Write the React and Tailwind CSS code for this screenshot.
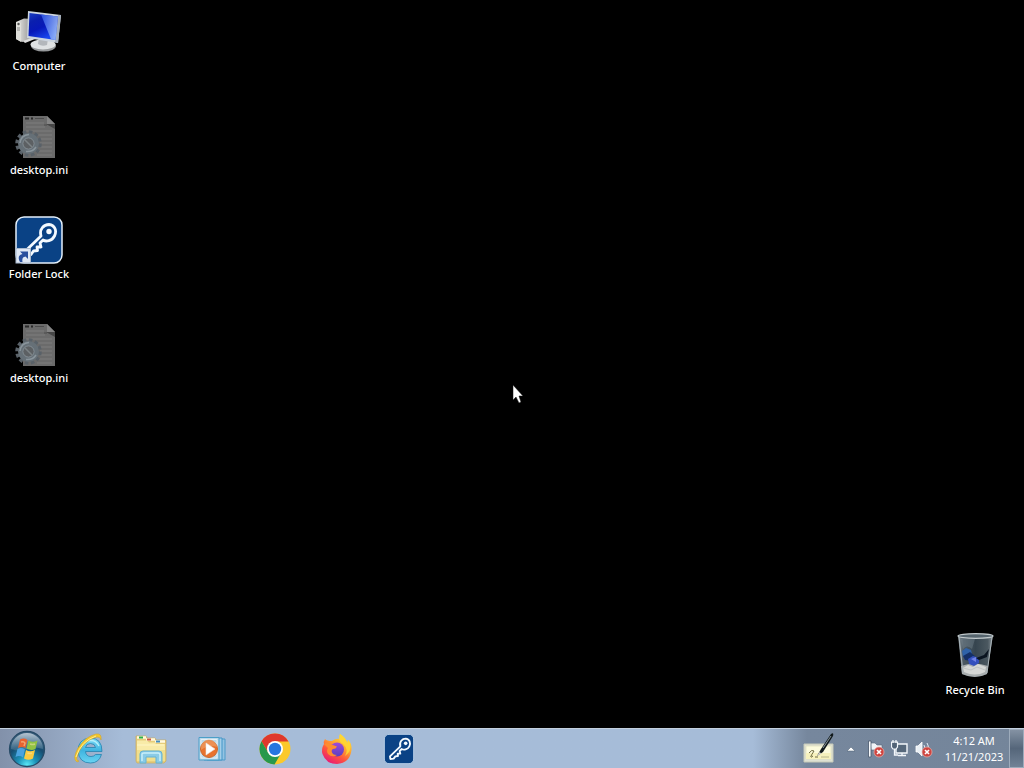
import React from "react";

function ComputerIcon() {
  return (
    <svg viewBox="0 0 48 48" className="size-12" aria-hidden="true">
      <defs>
        <linearGradient id="screen" x1="0" y1="0" x2="0.5" y2="1">
          <stop offset="0" stopColor="#1a3fc4" />
          <stop offset="0.3" stopColor="#0a1fae" />
          <stop offset="0.6" stopColor="#0718b8" />
          <stop offset="1" stopColor="#1a48f0" />
        </linearGradient>
        <linearGradient id="screenGlow" x1="0" y1="0" x2="1" y2="0.3">
          <stop offset="0" stopColor="#2b55ea" />
          <stop offset="1" stopColor="#9dbcf8" />
        </linearGradient>
        <linearGradient id="tower" x1="0" y1="0" x2="1" y2="0">
          <stop offset="0" stopColor="#f1f1ee" />
          <stop offset="0.4" stopColor="#c4c4c2" />
          <stop offset="1" stopColor="#8a8a8a" />
        </linearGradient>
      </defs>
      <path d="M1 14 9 10.500 18 11V31L7 34 1 31Z" fill="url(#tower)" />
      <path d="M1 14 6 15V34L1 31Z" fill="#deded9" />
      <circle cx="3.5" cy="16" r="1.200" fill="#555" />
      <path d="M2 20h3M2 22h3" stroke="#888" strokeWidth="1" />
      <path d="M8 33 19 29 20 31 10 35Z" fill="#ddd" />
      <ellipse cx="28.500" cy="38" rx="12.500" ry="5.500" fill="#96999b" />
      <ellipse cx="28" cy="36.500" rx="12.500" ry="5" fill="#dfe2e3" />
      <path d="M24 29 33 31 32 37Q27 39 23 36Z" fill="#b3b7bb" />
      <path d="M13 3 46 7 43 35 12 30Z" fill="#ccd5df" />
      <path d="M43 7 46 7 43 35 40 34Z" fill="#a3adba" />
      <path d="M14.500 5 43 8.500 40.500 32 13.500 28Z" fill="url(#screen)" />
      <path d="M26 6.400 43 8.500 40.500 32 36 31.300Z" fill="url(#screenGlow)" opacity=".85" />
    </svg>
  );
}

function ConfigFileIcon() {
  return (
    <svg viewBox="0 0 48 48" className="size-12" aria-hidden="true">
      <path d="M8 4H32L40 12V46H8Z" fill="#6b6b6b" />
      <path d="M32 4 40 12H32Z" fill="#858585" />
      <path d="M31 12 40 12V17Z" fill="#464646" />
      <path d="M11 11h18M11 15h19M11 19h26M20 23h17M22 27h15M25 31h12M25 35h12M24 39h13M22 43h15" stroke="#7e7e7e" />
      <path d="M10 6.500h4M16 6.500h2" stroke="#292929" strokeWidth="2" />
      <path d="M20 6.500h9M29 13h3" stroke="#4c4c4c" />
      <g fill="none">
        <circle cx="13.500" cy="31.500" r="11.500" stroke="#596168" strokeWidth="3.500" strokeDasharray="3.500 2.520" />
        <circle cx="13.500" cy="31.500" r="8" stroke="#667077" strokeWidth="5" />
        <path d="M5 31Q6 23 14 22.500M21 35Q18 40 11 39.500" stroke="#8a959c" strokeWidth="1.500" />
        <circle cx="13.500" cy="31.500" r="5.500" strokeWidth="1" stroke="#87939b" />
      </g>
      <circle cx="13.500" cy="31.500" r="5" fill="#5c6063" />
      <path d="m10 28 7 7" stroke="#7c8386" strokeWidth="1.500" />
    </svg>
  );
}

function KeyShape() {
  return (
    <g>
      <path
        d="M26 20C24 13 29 8.500 34 8.500C40 9 42 15 39.500 20C37 25 31 26 28 24L25 27 26 31 22 31 22.500 34.500 18.500 35 16 38.500 11 39 10.500 35Z"
        fill="#0a4285"
        stroke="#f4faff"
        strokeWidth="2.800"
        strokeLinejoin="round"
      />
      <circle cx="34" cy="15.500" r="2.700" fill="#f4faff" />
    </g>
  );
}

function FolderLockIcon() {
  return (
    <svg viewBox="0 0 48 48" className="size-12" aria-hidden="true">
      <rect x="1" y="1" width="46" height="46" rx="8" fill="#0a4285" stroke="#e4f0fb" strokeWidth="1.500" />
      <KeyShape />
      <rect x="1" y="32.500" width="14.500" height="14.500" fill="#dfe8f5" stroke="#a8b8cd" />
      <path d="M5 46Q1.500 39.500 7.500 38L5 35.500H13V43L10.500 40.500Q6.500 41 7.500 46Z" fill="#284f9e" />
    </svg>
  );
}

function RecycleBinIcon() {
  return (
    <svg viewBox="0 0 48 48" className="size-12" aria-hidden="true">
      <defs>
        <linearGradient id="bin" x1="0" x2="1">
          <stop offset="0" stopColor="#8d989e" />
          <stop offset="0.15" stopColor="#4d5a64" />
          <stop offset="0.5" stopColor="#36454f" />
          <stop offset="0.85" stopColor="#4b5860" />
          <stop offset="1" stopColor="#8b959b" />
        </linearGradient>
      </defs>
      <path d="M7 3 11 42Q24 48 36 42L42 3Z" fill="url(#bin)" />
      <path d="M10 34Q23 29 37 34L36 42Q24 48 11 42Z" fill="#a9aeaf" />
      <path d="M12 36 17 33 22 35 27 32 35 35 34 40Q24 45 13 40Z" fill="#d5d7d5" />
      <path d="m12 36 8 2 6-3 8 3" fill="none" stroke="#bfc3c2" />
      <path d="M11 19 15 16 20 18 21 22 17 26 12 25Z" fill="#2f62a8" />
      <path d="M12 24 19 20 24 24 20 29 14 28Z" fill="#142f66" />
      <path d="M17 27 22 24 28 26 28 31 23 34 18 32Z" fill="#3450bd" />
      <path d="M20 27 25 25 25 30Z" fill="#7182e6" />
      <path d="m25 26 8-3 5-6-2 8-8 3Z" fill="#0a1420" />
      <path d="M8 5 12 41M41 5 36 41" stroke="#a9b3b8" strokeWidth="1" />
      <path d="M10 7H24L21 17Q16 12 12 17Z" fill="#8c9ba5" opacity=".3" />
      <ellipse cx="24.500" cy="4" rx="17.500" ry="2.300" fill="#56656e" stroke="#c0c8cb" strokeWidth="1.200" />
    </svg>
  );
}

function StartIcon() {
  return (
    <svg viewBox="0 0 38 38" className="size-[38px]" aria-hidden="true">
      <defs>
        <radialGradient id="orb" cx="50%" cy="96%" r="90%">
          <stop offset="0" stopColor="#5ceaf8" />
          <stop offset="0.3" stopColor="#1c92b8" />
          <stop offset="0.65" stopColor="#174d70" />
          <stop offset="1" stopColor="#3d6280" />
        </radialGradient>
        <linearGradient id="orbShine" x1="0" y1="0" x2="0" y2="1">
          <stop offset="0" stopColor="#d3dde5" stopOpacity=".8" />
          <stop offset="1" stopColor="#92b0c3" stopOpacity=".2" />
        </linearGradient>
      </defs>
      <circle cx="19" cy="19" r="17.500" fill="url(#orb)" stroke="#274b67" strokeWidth="1.300" />
      <path d="M3 19A16 16 0 0 1 35 19Q26 16 19 19 11 22 3 19Z" fill="url(#orbShine)" />
      <path d="M12 9.500Q16 7.500 19.500 10L17.500 18Q14 16 10 18Z" fill="#e8622f" />
      <path d="M20.500 10.500Q25 13 29.500 10.500L27.500 19Q23 21 18.500 18.500Z" fill="#91c343" />
      <path d="M9.500 19Q13 17 17 19.500L15 27.500Q11.500 25 7.500 27Z" fill="#4aa3df" />
      <path d="M18 20Q22 22.500 27 20L25 28.500Q20.500 31 16 28.500Z" fill="#fccb40" />
      <path d="M13 12Q16 11 17 13L16 16M22 14Q25 15 27 14M19.500 23Q22 24 24 23" stroke="#fbe6b0" strokeWidth="1.500" fill="none" opacity=".5" />
    </svg>
  );
}

function ExplorerIcon() {
  return (
    <svg viewBox="0 0 32 32" className="size-8" aria-hidden="true">
      <defs>
        <linearGradient id="ieBlue" x1="0" y1="0" x2="0" y2="1">
          <stop offset="0" stopColor="#7fdcf7" />
          <stop offset="0.5" stopColor="#3fb4e0" />
          <stop offset="1" stopColor="#6ad4f2" />
        </linearGradient>
      </defs>
      <path d="M29 18.500H12.500Q13 23.500 18 23.500Q21 23.500 22.500 21.500H28.500Q26 30 17.500 30Q6 30 5 18Q5 6 17 5Q29 5 29 18.500ZM12.500 14.500H22.500Q22 10.500 17.500 10.500Q13 10.500 12.500 14.500Z" fill="url(#ieBlue)" stroke="#2682ae" strokeWidth=".8" />
      <path d="M9 13Q11 7.500 17.500 7.500Q23.500 7.500 26 13" fill="none" stroke="#b4effb" strokeWidth="1.300" />
      <path d="M4 29Q-1 26 5 15Q13 3 23 1Q29 0 28 7Q27 3 22 4.500Q12 8 7 17Q1 28 6 28Z" fill="#f3c62e" stroke="#d5a01b" strokeWidth=".5" />
      <path d="M3 24Q8 8 23 3" stroke="#ffef91" strokeWidth="1" fill="none" />
    </svg>
  );
}

function FilesIcon() {
  return (
    <svg viewBox="0 0 32 32" className="size-8" aria-hidden="true">
      <path d="M1 3H11L12 5H20L21 7H31V28L29 30H2L1 28Z" fill="#e6cd7b" stroke="#c9ae60" strokeWidth=".7" />
      <path d="M2 4.500H11M11 6.500H20M20 8.500H30" stroke="#fff9df" strokeWidth="2.500" />
      <path d="M4 4.500H8" stroke="#2cae49" strokeWidth="2" />
      <path d="M12 6.500H16" stroke="#ce5642" strokeWidth="2" />
      <path d="M21 8.500H25" stroke="#448dbd" strokeWidth="2" />
      <path d="M2 7.500H12L14 9.500H20L21 11H30V28H2Z" fill="#f8eba8" />
      <path d="M2 17H30V28H2Z" fill="#f0df8e" />
      <path d="M2 12H29" stroke="#fff6c6" />
      <path d="M5 30V21Q5 18 8 18H24Q27 18 27 21V30H21V24H11V30Z" fill="#8acbe6" stroke="#65b2d3" />
      <path d="M7 28V21Q7 20 9 20H23Q25 20 25 22V28" fill="none" stroke="#c8effa" strokeWidth="1.500" />
    </svg>
  );
}

function MediaIcon() {
  return (
    <svg viewBox="0 0 32 32" className="size-8" aria-hidden="true">
      <path d="M10 6H28V27H10Z" fill="#94c3e2" stroke="#4c9bc9" />
      <path d="M7 5H25V27H7Z" fill="#a5cfe9" stroke="#4295c7" />
      <path d="M2 4.500H22V27H2Z" fill="#bcd9ea" stroke="#4b9fc8" />
      <path d="M4 6.500H20V25H4Z" fill="none" stroke="#e2f0f7" />
      <circle cx="12" cy="16" r="8.500" fill="#e8722e" stroke="#c9692f" />
      <path d="M4 15A8 8 0 0 1 20 14Q12 11 4 17Z" fill="#f0a56d" opacity=".6" />
      <path d="M9 10 18 16 9 22Z" fill="#fff" stroke="#e7e4df" strokeWidth=".6" />
    </svg>
  );
}

function ChromeIcon() {
  return (
    <svg viewBox="0 0 32 32" className="size-8" aria-hidden="true">
      <circle cx="16" cy="16" r="15.500" fill="#fbc92b" />
      <path d="M16 16V8.500H29.500A15.500 15.500 0 0 0 2.500 8.300L9.500 20Z" fill="#df382c" />
      <path d="M16 16 9.500 20 2.500 8.300A15.500 15.500 0 0 0 15.500 31.500L22.500 19.500Z" fill="#27984c" />
      <circle cx="16" cy="16" r="8" fill="#fff" />
      <circle cx="16" cy="16" r="6.200" fill="#2676df" />
    </svg>
  );
}

function FirefoxIcon() {
  return (
    <svg viewBox="0 0 32 32" className="size-8" aria-hidden="true">
      <defs>
        <linearGradient id="fox" x1="0.8" y1="0" x2="0.2" y2="1">
          <stop offset="0" stopColor="#ffe53f" />
          <stop offset="0.35" stopColor="#ffad2e" />
          <stop offset="0.65" stopColor="#ff553d" />
          <stop offset="1" stopColor="#e5127d" />
        </linearGradient>
        <linearGradient id="foxCore" x1="0" y1="0" x2="0" y2="1">
          <stop offset="0" stopColor="#a04bd6" />
          <stop offset="1" stopColor="#5a3fbf" />
        </linearGradient>
      </defs>
      <path d="M4 6Q2 9 3 11Q0 16 1.500 21Q5 31 16 31Q29 30 30.500 17Q31 10 27 7L26.500 10Q24 4 19 1Q18 3 19 6Q15 5 11 8Q6 8 4 6Z" fill="url(#fox)" />
      <path d="M19 1Q16 8 22 11Q28 16 24 23Q31 18 29 11Q28 8 27 7L26.500 10Q24 4 19 1Z" fill="#ffd633" opacity=".9" />
      <circle cx="16" cy="16.500" r="7" fill="url(#foxCore)" />
      <path d="M3 11Q7 9 10 11.500Q12 12 16 13.500Q15 16 12 16Q10 17 11 19.500Q12 22 16 22Q11 25 7 21Q5 18 7 15Z" fill="#ff8c2e" />
    </svg>
  );
}

function KeyTaskIcon() {
  return (
    <svg viewBox="0 0 48 48" className="size-8" aria-hidden="true">
      <rect x="2" y="2" width="44" height="44" rx="7" fill="#0a4285" stroke="#b5cde6" strokeWidth="1.500" />
      <KeyShape />
    </svg>
  );
}

function TabletPenIcon() {
  return (
    <svg viewBox="0 0 32 32" className="size-8" aria-hidden="true">
      <path d="M1 11H30V29H1Z" fill="#dfe1d3" stroke="#c7cab8" />
      <path d="M3 13H28V26H3Z" fill="#fcfbdd" stroke="#dddeb9" strokeWidth=".7" />
      <path d="M3 20H28V26H3Z" fill="#f6f1bd" />
      <path d="M6 20Q9 16 11 18Q5 27 10 23M12 24H15" fill="none" stroke="#6e6a40" />
      <path d="M18 24H26" stroke="#b9b88c" />
      <path d="m14 23 4-7L28 1Q31 -1 30 3L20 19Z" fill="#11191b" />
      <path d="m20 15 8-12" stroke="#87949a" strokeWidth="1" />
      <path d="m14 23 2.500-4 2 1.500Z" fill="#ccc" />
    </svg>
  );
}

function RedBadge() {
  return (
    <g>
      <circle cx="12" cy="12" r="5" fill="#cf4540" stroke="#eab0ab" strokeWidth=".7" />
      <path d="m10 10 4 4m0-4-4 4" stroke="#fff" strokeWidth="1.600" />
    </g>
  );
}

function FlagIcon() {
  return (
    <svg viewBox="0 0 18 18" className="size-[18px]" aria-hidden="true">
      <path d="M3 3H8L10 5H15V12H10L8 10H4Z" fill="#f0f3f7" stroke="#56667a" strokeWidth=".6" />
      <path d="M1.500 1H4V17H1.500Z" fill="#f7f9fb" stroke="#46566a" strokeWidth=".8" />
      <RedBadge />
    </svg>
  );
}

function NetworkIcon() {
  return (
    <svg viewBox="0 0 18 18" className="size-[18px]" aria-hidden="true">
      <path d="M5 4H16V13H5ZM7 15.500H15M11 13V15" fill="#56687b" stroke="#f3f7fb" strokeWidth="1.400" />
      <path d="M.500 2H6.500V7L5 9H2L.500 7Z" fill="#526477" stroke="#f3f7fb" strokeWidth="1.200" />
      <path d="M2 0V3M5 0V3M3.500 9V15H7" fill="none" stroke="#f3f7fb" strokeWidth="1.300" />
    </svg>
  );
}

function SpeakerIcon() {
  return (
    <svg viewBox="0 0 18 18" className="size-[18px]" aria-hidden="true">
      <path d="M1 6H3L7 2V16L3 12H1Z" fill="#e9eff4" stroke="#fff" strokeWidth=".8" />
      <path d="M9 5Q11 8 9 12M12 3Q14 6 13 9" fill="none" stroke="#e3edf6" />
      <RedBadge />
    </svg>
  );
}

function Shortcut({ label, children }) {
  return (
    <button type="button" className="flex w-[78px] cursor-default flex-col items-center gap-0.5 text-[11px] leading-4 font-medium text-white">
      {children}
      <span className="whitespace-nowrap">{label}</span>
    </button>
  );
}

const tasks = [
  ["Internet Explorer", ExplorerIcon],
  ["Windows Explorer", FilesIcon],
  ["Windows Media Player", MediaIcon],
  ["Google Chrome", ChromeIcon],
  ["Firefox", FirefoxIcon],
  ["Folder Lock", KeyTaskIcon],
];

export default function App() {
  return (
    <div className="relative flex min-h-screen flex-col overflow-hidden bg-black font-['Noto_Sans','Open_Sans',sans-serif]">
      <main className="flex flex-1 items-stretch justify-between pt-2">
        <div className="flex flex-col gap-[38px]">
          <Shortcut label="Computer"><ComputerIcon /></Shortcut>
          <Shortcut label="desktop.ini"><ConfigFileIcon /></Shortcut>
          <Shortcut label="Folder Lock"><FolderLockIcon /></Shortcut>
          <Shortcut label="desktop.ini"><ConfigFileIcon /></Shortcut>
        </div>
        <div className="flex items-end pr-[10px] pb-[30px]">
          <Shortcut label="Recycle Bin"><RecycleBinIcon /></Shortcut>
        </div>
      </main>

      <footer className="flex h-10 items-stretch border-t border-[#c3d0df] bg-linear-to-r from-[#8291aa] via-[#a6bcd8] via-12% to-[#a6bcd8]">
        <button type="button" aria-label="Start" className="mr-1 flex w-[54px] items-center justify-center">
          <StartIcon />
        </button>
        <nav className="flex flex-1" aria-label="Taskbar">
          {tasks.map(([label, Icon]) => (
            <button key={label} type="button" aria-label={label} className="flex w-[62px] items-center justify-center">
              <Icon />
            </button>
          ))}
        </nav>
        <div className="flex items-center bg-linear-to-r from-[#a6bcd8] via-[#76879d] via-20% to-[#74859a] pl-[50px]">
          <button type="button" aria-label="Tablet input" className="mr-2"><TabletPenIcon /></button>
          <button type="button" aria-label="Show hidden icons" className="mr-2 flex size-4 items-center justify-center">
            <svg viewBox="0 0 10 6" className="h-1.5 w-2.5" aria-hidden="true">
              <path d="M1 5 5 1 9 5Z" fill="#fff" stroke="#4a5c71" strokeWidth=".5" />
            </svg>
          </button>
          <div className="flex gap-1.5">
            <button type="button" aria-label="Action center"><FlagIcon /></button>
            <button type="button" aria-label="Network"><NetworkIcon /></button>
            <button type="button" aria-label="Volume"><SpeakerIcon /></button>
          </div>
          <button type="button" className="ml-1.5 w-[70px] text-center text-[11px] leading-4 text-white">
            <time dateTime="2023-11-21T04:12">
              <span className="block">4:12 AM</span>
              <span className="block">11/21/2023</span>
            </time>
          </button>
          <button type="button" aria-label="Show desktop" className="h-full w-[15px] border border-[#9dabbb] bg-linear-to-b from-[#8492a3] via-[#55667a] to-[#718296]" />
        </div>
      </footer>

      <svg viewBox="0 0 12 20" className="pointer-events-none absolute top-1/2 left-1/2 h-5 w-3" aria-hidden="true">
        <path d="M1 1V16L4 13 7 19 9 18 7 12H11Z" fill="#fff" stroke="#111" strokeWidth=".5" />
      </svg>
    </div>
  );
}
